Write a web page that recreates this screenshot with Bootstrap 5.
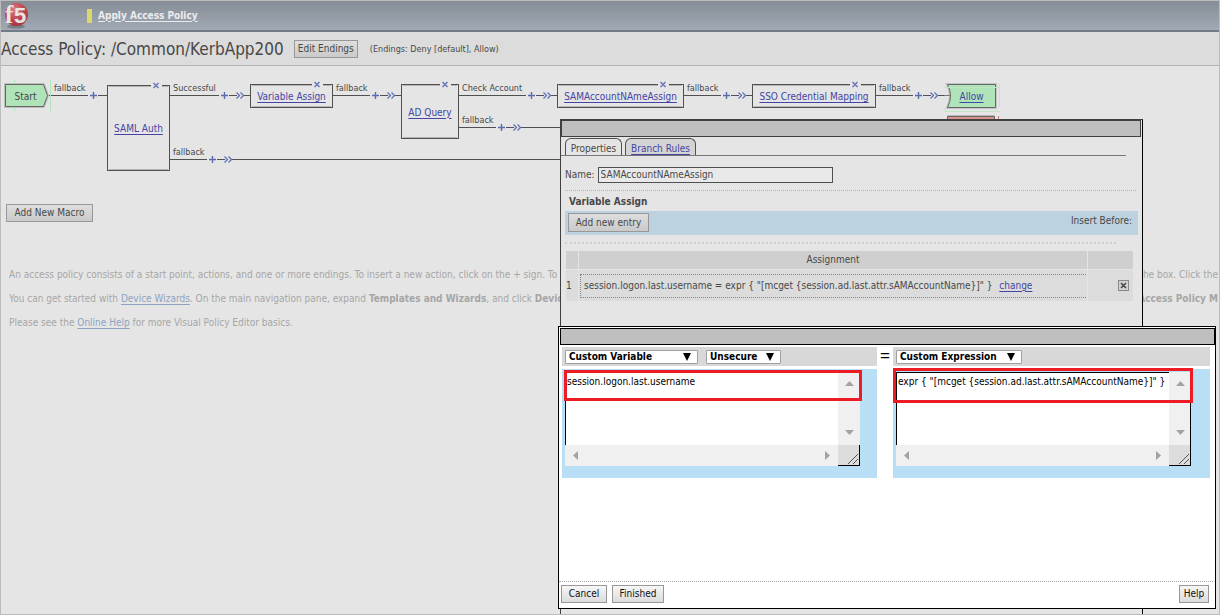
<!DOCTYPE html>
<html lang="en">
<head>
<meta charset="utf-8">
<meta name="viewport" content="width=device-width, initial-scale=1">
<title>Access Policy</title>
<link rel="stylesheet" href="https://cdn.jsdelivr.net/npm/bootstrap@5.3.0/dist/css/bootstrap.min.css">
<style>
  :root { --ink: #484848; --line: #505050; --link: #4444a4; }
  body { font: 10px/16px "DejaVu Sans Condensed", "DejaVu Sans", sans-serif; color: var(--ink); background: #e5e5e5; min-height: 100vh; }
  .page { min-height: 100vh; border: 1px solid #bcbcbc; }
  a { color: var(--link); text-underline-offset: 2px; }
  .masthead { height: 31px; border-bottom: 2px solid #727b87; background: linear-gradient(#858e96, #a1aab4); padding-left: 3px; }
  .masthead a { color: #ececec; }
  .marker { width: 5px; height: 14px; background: #dcd96c; margin: 0 6px 0 58px; }
  .titlebar { height: 34px; background: #dcdcdc; border-bottom: 1px solid #b2b2b2; }
  .titlebar h1 { font-size: 17px; line-height: 32px; color: var(--ink); }
  .endings, .branch-label { font-size: 9px; }
  .push { border: 1px solid #989898; border-radius: 0; background: linear-gradient(#dedede, #cacaca); font: inherit; color: var(--ink); padding: 0; text-align: center; white-space: nowrap; }
  .push.bright { background: linear-gradient(#f6f6f6, #dcdcdc); color: #111; }
  .edit-endings { width: 64px; height: 18px; margin: 0 12px 0 10px; }
  .macro { display: block; width: 87px; height: 18px; margin: 0 0 44px 5px; }

  /* policy diagram */
  .canvas { height: 138px; }
  .canvas svg { left: 0; top: 0; }
  .node { display: flex; align-items: center; justify-content: center; white-space: nowrap; padding-top: 2px; }
  .branch-label { white-space: nowrap; line-height: 12px; }
  .help-text { color: #a6a6a6; padding: 1px 1px 0 8px; }
  .help-text p { margin: 0 0 8px; }
  .help-text a { color: #8ea2bf; }
  .lead-part { min-width: 0; }

  /* properties window */
  .win { border: 1px solid; }
  .win-props { left: 559px; right: 76px; top: 118px; bottom: 0; background: #e5e5e5; border-color: #404040 #000 #404040 #404040; border-bottom: 0; }
  .win-bar { height: 17px; background: #bfbfbf; border: 1px solid #404040; margin: 1px; }
  .tabs { padding-left: 4px; margin: 1px 16px 0 0; border-bottom: 1px solid #777; gap: 3px; }
  .tabs a { height: 17px; line-height: 19px; border: 1px solid var(--line); border-bottom: 0; border-radius: 6px 6px 0 0; text-align: center; }
  .tab-on { width: 57px; color: var(--ink); text-decoration: none; background: #e5e5e5; margin-bottom: -1px; }
  .tab-off { width: 71px; background: #d4d4d4; }
  .name-row { margin: 11px 0 7px 4px; gap: 3px; }
  .name-box { width: 235px; height: 16px; border: 1px solid var(--line); background: #e9e9e9; color: var(--ink); padding: 0 2px; font: inherit; }
  .dots { border-top: 1px dotted #b0b0b0; }
  .first-dots { margin: 0 6px 0 4px; }
  .sec-title { font: bold 10px/16px "DejaVu Sans Condensed", sans-serif; margin: 3px 0 1px 8px; }
  .entry-bar { height: 24px; background: #bcd2e1; padding: 2px 6px 0 3px; margin: 0 4px; }
  .add-entry { width: 81px; height: 19px; }
  .second-dots { margin: 7px 26px 6px 4px; border-top: 2px dotted #cfcfcf; }
  .assign { border-spacing: 1px; border-collapse: separate; width: calc(100% - 12px); margin-left: 4px; table-layout: fixed; }
  .assign th { background: #cfcfcf; height: 18px; padding: 0; font-weight: 400; text-align: center; }
  .assign td { background: #dcdcdc; height: 31px; padding: 0; }
  .c-num { width: 12px; }
  .c-end { width: 45px; }
  .expr-box { height: 24px; line-height: 22px; border: 1px dotted #888; border-right: 0; margin: 0 1px; padding-left: 3px; }
  .drop-btn { width: 11px; height: 11px; border: 1px solid #888; background: #d2d2d2; padding: 0; line-height: 0; }

  /* expression editor window */
  .win-edit { left: 557px; right: 3px; top: 325px; height: 283px; background: #fff; border-color: #000; color: #000; }
  .win-edit .win-bar { border-color: #000; margin: 1px 0 2px 1px; }
  .editor { display: grid; grid-template-columns: 315fr 16px 317fr; margin: 0 5px 0 3px; }
  .pick-row { background: #d8d8d8; height: 19px; padding: 3px 0 0 3px; gap: 8px; }
  .pick-row select { appearance: none; height: 14px; border: 1px solid #a0a0a0; border-radius: 1px; background: #fff; font: bold 10px/12px "DejaVu Sans Condensed", sans-serif; padding: 0 3px; color: #000; width: 100%; display: block; }
  .pick { height: 14px; }
  .pick svg { right: 7px; top: 3px; }
  .pick-a { width: 133px; }
  .pick-b { width: 75px; }
  .pick-c { width: 126px; }
  .equals { font: 17px/18px "Liberation Sans", sans-serif; text-align: center; }
  .field { background: #b9dff6; height: 109px; margin-top: 3px; padding: 3px 0 0 3px; }
  .scroller { display: grid; grid-template-columns: 1fr 22px; grid-template-rows: 73px 21px; width: 295px; background: #f0f0f0; }
  .scroller textarea { resize: none; overflow: hidden; border: 1px solid #000; border-width: 1px 0 0 1px; border-radius: 0; white-space: nowrap; padding: 1px; font: inherit; line-height: 15px; color: #000; background: #fff; outline: 0; }
  .grip { background: #dcdcdc; border-right: 1px solid #000; border-bottom: 1px solid #000; }
  .mark-box { border: 3px solid #ed1c24; pointer-events: none; }
  .mark-left { left: 2px; top: 1px; width: 298px; height: 31px; }
  .mark-right { left: 0; top: -1px; width: 300px; height: 35px; }
  .win-foot { border-top: 1px dotted #aaa; padding: 3px 4px 0 2px; margin-right: 2px; height: 27px; }
  .win-foot button { height: 18px; line-height: 16px; }
  .b-cancel { width: 46px; margin-right: 5px; }
  .b-finish { width: 52px; }
  .b-help { width: 30px; }
</style>
</head>
<body>
<div class="page position-relative overflow-hidden">
  <header class="masthead d-flex align-items-center">
    <svg width="25" height="27" viewBox="0 0 25 27" role="img" aria-label="f5">
      <defs><radialGradient id="ball" cx=".42" cy=".3" r=".75"><stop offset="0" stop-color="#d88288"/><stop offset=".55" stop-color="#c04450"/><stop offset="1" stop-color="#a03540"/></radialGradient></defs>
      <ellipse cx="12" cy="24.500" rx="9" ry="2" fill="#767d84"/>
      <circle cx="12.500" cy="12.500" r="11.500" fill="url(#ball)"/>
      <text x="1" y="21" font-family="Liberation Serif, serif" font-weight="700" font-size="25" fill="#e8e4e4">f</text>
      <text x="10" y="21" font-family="Liberation Sans, sans-serif" font-weight="700" font-size="22" fill="#e8e4e4">5</text>
    </svg>
    <span class="marker"></span>
    <a href="#" class="fw-bold">Apply Access Policy</a>
  </header>

  <div class="titlebar d-flex align-items-center">
    <h1 class="m-0 fw-normal text-nowrap">Access Policy: /Common/KerbApp200</h1>
    <button type="button" class="push edit-endings">Edit Endings</button>
    <span class="endings text-nowrap">(Endings: Deny [default], Allow)</span>
  </div>

  <main>
    <div class="canvas position-relative" id="canvas">
      <svg class="position-absolute" width="1010" height="138" viewBox="1 66 1010 138" fill="none" aria-hidden="true">
        <defs>
          <path id="plus" d="M-3 .5H4M.5-3V4" stroke="#5a6cb0" stroke-width="1.400"/>
          <path id="chev" d="M-3.500-2.500-.5 .5-3.500 3.500M.5-2.500 3.500 .5.5 3.500" stroke="#6272b4" stroke-width="1.300"/>
          <g id="cross"><path d="M-5 .5H6" stroke="#e5e5e5" stroke-width="3"/><path d="M-2.500-2 2.500 3M2.500-2-2.500 3" stroke="#6b7ab8" stroke-width="1.500"/></g>
        </defs>
        <g stroke="#505050" stroke-width="1">
          <path d="M47 95.500H88M98 95.500H107M170 95.500H219M229 95.500H237M244 95.500H250M333 95.500H370M380 95.500H388M395 95.500H401M459 95.500H526M536 95.500H544M551 95.500H557M684 95.500H721M731 95.500H739M746 95.500H752M876 95.500H913M923 95.500H931M938 95.500H951"/>
          <path d="M459 127.500H496M506 127.500H514M521 127.500H562M170 159.500H207M217 159.500H225M232 159.500H562"/>
        </g>
        <g id="frames"></g>
        <path d="M5.500 84.500H43.500L47.500 95.500 43.500 106.500H5.500Z" stroke="#bdbdbd" stroke-width="3"/>
        <path d="M5.500 84.500H43.500L47.500 95.500 43.500 106.500H5.500Z" fill="#afe4b8" stroke="#666"/>
        <path d="M14.500 80V84M14.500 107V111M50.500 80V111" stroke="#afe4b8"/>
        <path d="M947.500 84.500H995.500V107.500H947.500Q953.500 95.500 947.500 84.500Z" stroke="#c4c4c4" stroke-width="3"/>
        <path d="M947.500 84.500H995.500V107.500H947.500Q953.500 95.500 947.500 84.500Z" fill="#afe4b8" stroke="#666"/>
        <path d="M944 87.500H1000M944 111.500H1000M999.500 84V107" stroke="#bfe6c5"/>
        <path d="M944 95.500H951" stroke="#777"/>
        <path d="M947 115.500H995" stroke="#b8b8b8"/>
        <path d="M947.500 120V116.500H994.500V120Z" fill="#d9938c" stroke="#666"/>
        <path d="M998.500 116V119" stroke="#c77"/>
        <g id="marks"></g>
      </svg>
    </div>
    <button type="button" class="push macro">Add New Macro</button>
    <div class="help-text text-nowrap">
      <p class="d-flex"><span class="lead-part overflow-hidden flex-fill">An access policy consists of a start point, actions, and one or more endings. To insert a new action, click on the + sign. To edit an action, click on its name. To delete an action, click on the x at the corner of</span><span>the box. Click the</span></p>
      <p class="d-flex"><span class="lead-part overflow-hidden flex-fill">You can get started with <a href="#">Device Wizards</a>. On the main navigation pane, expand <b>Templates and Wizards</b>, and click <b>Device Wizards</b>.</span><b>Access Policy M</b></p>
      <p>Please see the <a href="#">Online Help</a> for more Visual Policy Editor basics.</p>
    </div>
  </main>

  <section class="win win-props position-absolute" aria-label="Properties">
    <div class="win-bar mt-0 ms-0"></div>
    <nav class="tabs d-flex"><a class="tab-on" href="#">Properties</a><a class="tab-off" href="#">Branch Rules</a></nav>
    <div class="name-row d-flex align-items-center"><label for="nm">Name:</label><input id="nm" class="name-box" value="SAMAccountNAmeAssign"></div>
    <div class="dots first-dots"></div>
    <h2 class="sec-title">Variable Assign</h2>
    <div class="entry-bar d-flex justify-content-between align-items-start">
      <button type="button" class="push add-entry">Add new entry</button><span>Insert Before:</span>
    </div>
    <div class="dots second-dots"></div>
    <table class="assign">
      <colgroup><col class="c-num"><col><col class="c-end"></colgroup>
      <thead><tr><th></th><th>Assignment</th><th></th></tr></thead>
      <tbody><tr><td>1</td><td><div class="expr-box">session.logon.last.username = expr { "[mcget {session.ad.last.attr.sAMAccountName}]" } <a class="ms-1" href="#">change</a></div></td>
      <td class="text-end"><button type="button" class="drop-btn me-1" aria-label="Delete"><svg width="9" height="9" viewBox="0 0 9 9"><path d="M2 2 7 7M7 2 2 7" stroke="#444" stroke-width="1.500"/></svg></button></td></tr></tbody>
    </table>
  </section>

  <section class="win win-edit position-absolute d-flex flex-column" aria-label="Expression">
    <div class="win-bar"></div>
    <div class="editor">
      <div>
        <div class="pick-row d-flex">
          <div class="pick position-relative pick-a"><select aria-label="Variable type"><option>Custom Variable</option></select><svg class="position-absolute" width="8" height="8"><path d="M0 0H8L4 8Z"/></svg></div>
          <div class="pick position-relative pick-b"><select aria-label="Security"><option>Unsecure</option></select><svg class="position-absolute" width="8" height="8"><path d="M0 0H8L4 8Z"/></svg></div>
        </div>
        <div class="field position-relative">
          <div class="scroller">
            <textarea aria-label="Variable">session.logon.last.username</textarea>
            <svg width="22" height="73"><path d="M7 14H16L11.500 9ZM7 58H16L11.500 63Z" fill="#a3a3a3"/></svg>
            <svg width="273" height="21"><path d="M13 6V15L8 10.500ZM260 6V15L265 10.500Z" fill="#a3a3a3"/></svg>
            <div class="grip"><svg class="d-block" width="21" height="20"><path d="M10 19 20 9M15 19 20 14" stroke="#555"/></svg></div>
          </div>
          <div class="mark-box mark-left position-absolute"></div>
        </div>
      </div>
      <div class="equals">=</div>
      <div>
        <div class="pick-row d-flex">
          <div class="pick position-relative pick-c"><select aria-label="Expression type"><option>Custom Expression</option></select><svg class="position-absolute" width="8" height="8"><path d="M0 0H8L4 8Z"/></svg></div>
        </div>
        <div class="field position-relative">
          <div class="scroller">
            <textarea aria-label="Expression">expr { "[mcget {session.ad.last.attr.sAMAccountName}]" }</textarea>
            <svg width="22" height="73"><path d="M7 14H16L11.500 9ZM7 58H16L11.500 63Z" fill="#a3a3a3"/><path d="M21.500 30V73" stroke="#000"/></svg>
            <svg width="273" height="21"><path d="M13 6V15L8 10.500ZM260 6V15L265 10.500Z" fill="#a3a3a3"/></svg>
            <div class="grip"><svg class="d-block" width="21" height="20"><path d="M10 19 20 9M15 19 20 14" stroke="#555"/></svg></div>
          </div>
          <div class="mark-box mark-right position-absolute"></div>
        </div>
      </div>
    </div>
    <div class="win-foot d-flex mt-auto">
      <button type="button" class="push bright b-cancel">Cancel</button>
      <button type="button" class="push bright b-finish">Finished</button>
      <button type="button" class="push bright b-help ms-auto">Help</button>
    </div>
  </section>
</div>

<script>
  // Boxes, labels and connector marks of the policy diagram, in page coordinates.
  const origin = { x: 1, y: 66 };
  const nodes = [
    ['Start', 5, 84, 41, 23, 0], ['SAML Auth', 107, 85, 63, 86, 156],
    ['Variable Assign', 250, 84, 83, 24, 317], ['AD Query', 401, 84, 58, 55, 445],
    ['SAMAccountNAmeAssign', 557, 84, 127, 24, 663], ['SSO Credential Mapping', 752, 84, 124, 24, 855],
    ['Allow', 947, 84, 49, 24, 0]
  ];
  const labels = [['fallback', 54, 82], ['Successful', 173, 82], ['fallback', 173, 146], ['fallback', 336, 82],
    ['Check Account', 462, 82], ['fallback', 462, 114], ['fallback', 687, 82], ['fallback', 879, 82]];
  const plus = [[93, 95], [224, 95], [212, 159], [375, 95], [531, 95], [501, 127], [726, 95], [918, 95]];
  const chev = [[240, 95], [228, 159], [391, 95], [547, 95], [517, 127], [742, 95], [934, 95]];
  const canvas = document.getElementById('canvas');
  let frames = '', marks = '';
  for (const [name, x, y, w, h, cross] of nodes) {
    const el = document.createElement('div');
    el.className = 'node position-absolute';
    el.style.cssText = `left:${x - origin.x}px;top:${y - origin.y}px;width:${w}px;height:${h}px`;
    el.innerHTML = name === 'Start' ? name : `<a href="#">${name}</a>`;
    canvas.append(el);
    if (cross) {
      frames += `<rect x="${x + .5}" y="${y + .5}" width="${w - 1}" height="${h - 1}" stroke="#505050"/>` +
        `<path d="M${x + 2} ${y + 1.5}H${x + w - 2}M${x + 2} ${y + h - 1.5}H${x + w - 2}" stroke="#b5b5b5"/>`;
      marks += `<use href="#cross" x="${cross}" y="${y}"/>`;
    }
  }
  for (const [t, x, y] of labels) {
    const el = document.createElement('span');
    el.className = 'branch-label position-absolute';
    el.style.cssText = `left:${x - origin.x}px;top:${y - origin.y}px`;
    el.textContent = t;
    canvas.append(el);
  }
  for (const [x, y] of plus) marks += `<use href="#plus" x="${x}" y="${y}"/>`;
  for (const [x, y] of chev) marks += `<use href="#chev" x="${x}" y="${y}"/>`;
  document.getElementById('frames').innerHTML = frames;
  document.getElementById('marks').innerHTML = marks;
</script>
<script src="https://cdn.jsdelivr.net/npm/bootstrap@5.3.0/dist/js/bootstrap.bundle.min.js"></script>
</body>
</html>
